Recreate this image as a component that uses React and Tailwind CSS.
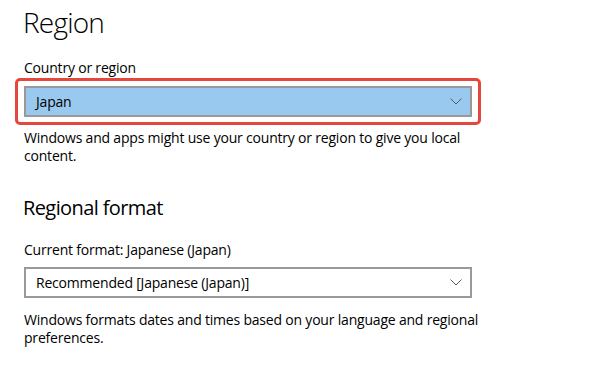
import React from "react";

function Chevron() {
  return (
    <svg width="12" height="7" viewBox="0 0 12 7" fill="none" className="shrink-0">
      <path d="M0.5 0.5 L6 6 L11.5 0.5" stroke="#5a5a5a" strokeWidth="1" />
    </svg>
  );
}

export default function App() {
  return (
    <div
      className="w-[600px] h-[370px] bg-white text-black overflow-hidden tracking-[-0.2px]"
      style={{ fontFamily: '"Open Sans", "Noto Sans", sans-serif' }}
    >
      <div className="pl-[23px] pt-[2px]">
        <h1 className="text-[28px] leading-[40px] font-light tracking-[-0.8px]">Region</h1>
      </div>
      <div className="pl-[24px] mt-[17px] text-[14px] leading-[18px]">Country or region</div>
      <div className="pl-[15px] mt-[1px]">
        <div className="w-[466px] border-[3px] border-[#e5463d] rounded-[5px] px-[6px] py-[5px]">
          <div className="h-[31px] border-2 border-[#999999] bg-[#99c9ef] flex items-center justify-between pl-[10px] pr-[8px]">
            <span className="text-[14px]">Japan</span>
            <Chevron />
          </div>
        </div>
      </div>
      <p className="pl-[24px] mt-[4px] w-[505px] text-[14px] leading-[18px]">
        Windows and apps might use your country or region to give you local content.
      </p>
      <h2 className="pl-[23px] mt-[29px] text-[20px] leading-[28px] tracking-[-0.6px]">Regional format</h2>
      <div className="pl-[24px] mt-[19px] text-[14px] leading-[18px]">Current format: Japanese (Japan)</div>
      <div className="pl-[24px] mt-[8px]">
        <div className="w-[448px] h-[31px] border-2 border-[#999999] bg-white flex items-center justify-between pl-[10px] pr-[8px]">
          <span className="text-[14px]">Recommended [Japanese (Japan)]</span>
          <Chevron />
        </div>
      </div>
      <p className="pl-[24px] mt-[13px] w-[505px] text-[14px] leading-[18px]">
        Windows formats dates and times based on your language and regional preferences.
      </p>
    </div>
  );
}
